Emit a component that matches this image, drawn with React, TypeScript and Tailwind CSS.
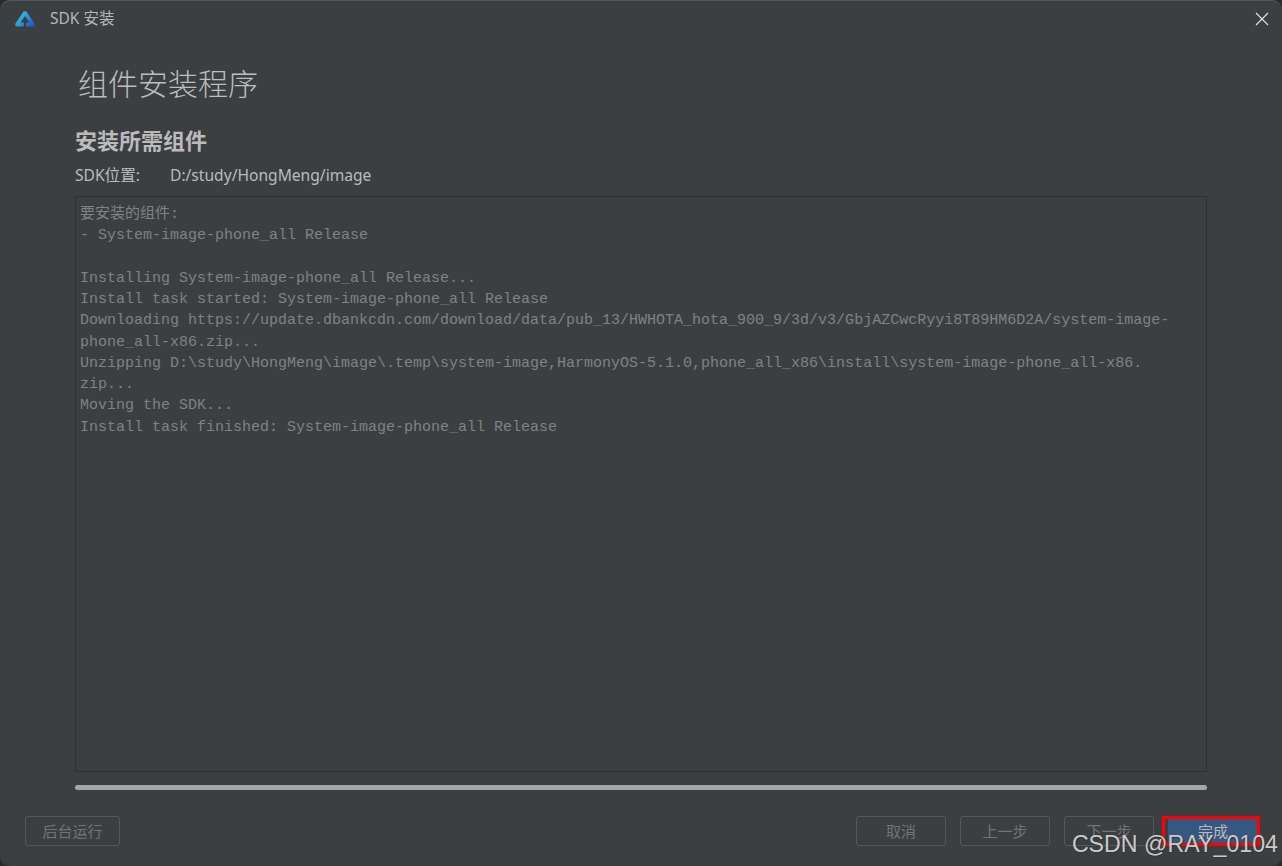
import React from 'react';

const sans = "font-['Noto_Sans','Noto_Sans_CJK_SC',sans-serif]";

const logLines = [
  '要安装的组件:',
  '- System-image-phone_all Release',
  ' ',
  'Installing System-image-phone_all Release...',
  'Install task started: System-image-phone_all Release',
  'Downloading https://update.dbankcdn.com/download/data/pub_13/HWHOTA_hota_900_9/3d/v3/GbjAZCwcRyyi8T89HM6D2A/system-image-',
  'phone_all-x86.zip...',
  'Unzipping D:\\study\\HongMeng\\image\\.temp\\system-image,HarmonyOS-5.1.0,phone_all_x86\\install\\system-image-phone_all-x86.',
  'zip...',
  'Moving the SDK...',
  'Install task finished: System-image-phone_all Release',
];

const Logo = () => (
  <svg width="20" height="16" viewBox="0 0 20 16">
    <defs>
      <linearGradient id="lg" x1="0" y1="0" x2="1" y2="0.8">
        <stop offset="0" stopColor="#3fd0d8" />
        <stop offset="0.5" stopColor="#2a9fd8" />
        <stop offset="1" stopColor="#2456c8" />
      </linearGradient>
    </defs>
    <path
      fillRule="evenodd"
      d="M8.4 0.8 Q10 -0.2 11.6 0.8 L19.5 12.4 Q20.4 15.6 17.5 15.6 H2.5 Q-0.4 15.6 0.5 12.4 Z M10 5.2 L5.4 11.6 H8.8 V15.6 H11.2 V11.6 H14.6 Z"
      fill="url(#lg)"
    />
  </svg>
);

const FooterButton = ({ label, wide }: { label: string; wide?: boolean }) => (
  <button
    className={`h-[30px] ${wide ? 'w-[95px]' : 'w-[90px]'} rounded-[3px] border border-[#55585a] text-[15px] text-[#717477]`}
  >
    {label}
  </button>
);

export default function App() {
  return (
    <div className={`relative w-[1282px] h-[866px] overflow-hidden bg-[#2b2b2b] ${sans}`}>
      <div className="flex flex-col h-full rounded-[10px] bg-[#3c3f41] border-t border-[#55585a]">
        <div className="flex items-center justify-between h-[35px] pl-[15px] pr-[13px] shrink-0">
          <div className="flex items-center gap-[15px]">
            <Logo />
            <span className="text-[15.5px] text-[#b4b6b8]">SDK 安装</span>
          </div>
          <svg width="14" height="14" viewBox="0 0 14 14" stroke="#e4e5e6" strokeWidth="1.1">
            <path d="M1 1 L13 13 M13 1 L1 13" />
          </svg>
        </div>

        <div className="flex flex-col flex-1 px-[75px]">
          <h1 className="mt-[27px] ml-[3px] text-[30px] leading-[42px] font-light text-[#bbbdbf]">组件安装程序</h1>
          <h2 className="mt-[19px] text-[22px] leading-[32px] font-bold text-[#bbbbbb]">安装所需组件</h2>
          <div className="flex mt-[8px] text-[15.6px] leading-[22px] text-[#bbbbbb]">
            <span className="w-[95px]">SDK位置:</span>
            <span>D:/study/HongMeng/image</span>
          </div>
          <div className="mt-[10px] h-[576px] border border-[#2f3133] pt-[7px] pl-[4px] font-['Liberation_Mono','Noto_Sans_CJK_SC',monospace] text-[15px] leading-[21.25px] text-[#7f8284]">
            {logLines.map((line, i) => (
              <div key={i} className="whitespace-pre">
                {line}
              </div>
            ))}
          </div>
          <div className="mt-[13px] h-[5px] rounded-full bg-[#a4a5a6]" />
        </div>

        <div className="flex items-center justify-between h-[30px] mb-[20px] pl-[25px] pr-[24px] shrink-0">
          <FooterButton label="后台运行" wide />
          <div className="flex gap-[14px]">
            <FooterButton label="取消" />
            <FooterButton label="上一步" />
            <FooterButton label="下一步" />
            <button className="h-[30px] w-[90px] rounded-[3px] bg-[#365880] text-[15px] text-[#bbbbbb]">完成</button>
          </div>
        </div>
      </div>

      {/* annotation + watermark over the screenshot */}
      <div className="absolute left-[1162px] top-[816px] w-[98px] h-[30px] border-[3px] border-[#ff0000]" />
      <div className="absolute right-[4px] top-[829px] font-['Liberation_Sans',sans-serif] text-[23.2px] leading-[30px] whitespace-nowrap text-[#c9cacb] [text-shadow:1px_1px_1px_#333]">
        CSDN @RAY_0104
      </div>
    </div>
  );
}
